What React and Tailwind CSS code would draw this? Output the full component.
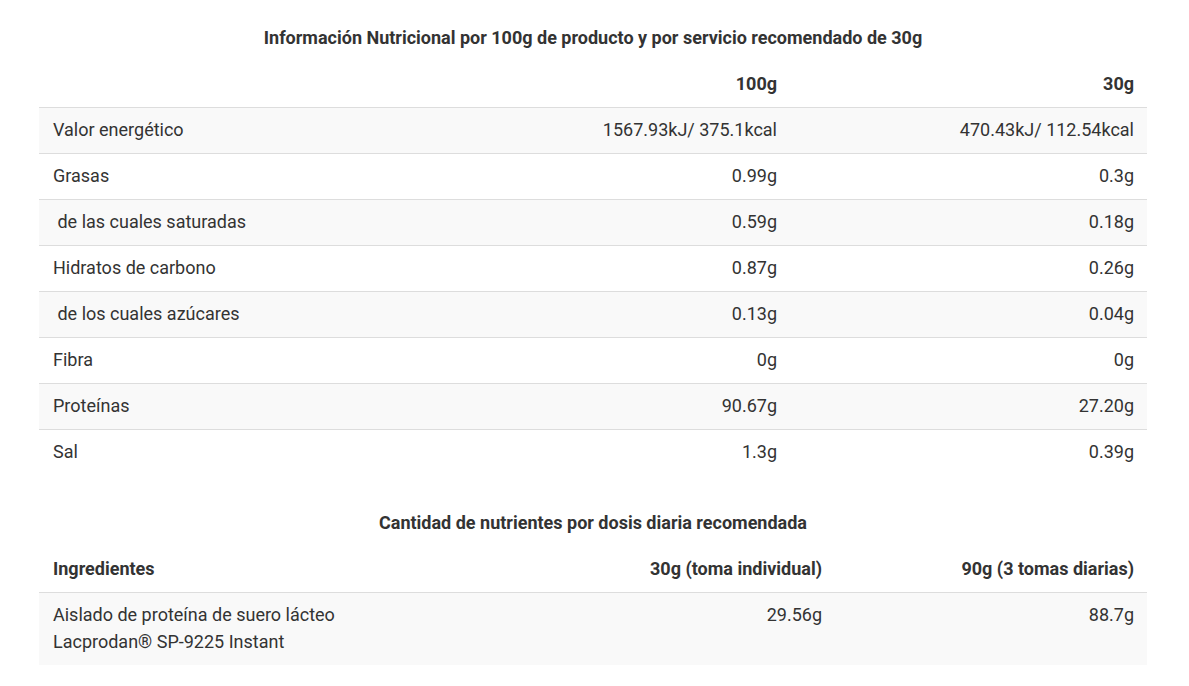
const nutrition = [
  ['Valor energético', '1567.93kJ/ 375.1kcal', '470.43kJ/ 112.54kcal'],
  ['Grasas', '0.99g', '0.3g'],
  ['\u00a0de las cuales saturadas', '0.59g', '0.18g'],
  ['Hidratos de carbono', '0.87g', '0.26g'],
  ['\u00a0de los cuales azúcares', '0.13g', '0.04g'],
  ['Fibra', '0g', '0g'],
  ['Proteínas', '90.67g', '27.20g'],
  ['Sal', '1.3g', '0.39g'],
];

function Caption({ children }) {
  return <div className="pt-[7px] pb-[11px] text-center font-bold">{children}</div>;
}

export default function App() {
  return (
    <div
      className="min-h-screen bg-white pl-[39px] pr-[42px] pt-[17px] text-[18px] leading-[27px] text-[#333]"
      style={{ fontFamily: 'Roboto, "Liberation Sans", sans-serif' }}
    >
      <Caption>Información Nutricional por 100g de producto y por servicio recomendado de 30g</Caption>
      <table className="w-full table-fixed border-collapse">
        <colgroup>
          <col />
          <col className="w-[357px]" />
          <col className="w-[357px]" />
        </colgroup>
        <thead>
          <tr className="font-bold">
            <th className="pl-[14px] pr-[13px] pt-[8px] pb-[10px]"></th>
            <th className="pl-[14px] pr-[13px] pt-[8px] pb-[10px] text-right">100g</th>
            <th className="pl-[14px] pr-[13px] pt-[8px] pb-[10px] text-right">30g</th>
          </tr>
        </thead>
        <tbody>
          {nutrition.map(([name, a, b], i) => (
            <tr key={name} className={`border-t border-[#ddd] ${i % 2 === 0 ? 'bg-[#f9f9f9]' : 'bg-white'}`}>
              <td className="pl-[14px] pr-[13px] pt-[8px] pb-[10px]">{name}</td>
              <td className="pl-[14px] pr-[13px] pt-[8px] pb-[10px] text-right">{a}</td>
              <td className="pl-[14px] pr-[13px] pt-[8px] pb-[10px] text-right">{b}</td>
            </tr>
          ))}
        </tbody>
      </table>

      <div className="mt-[27px]">
        <Caption>Cantidad de nutrientes por dosis diaria recomendada</Caption>
      </div>
      <table className="w-full table-fixed border-collapse">
        <colgroup>
          <col />
          <col className="w-[312px]" />
          <col className="w-[312px]" />
        </colgroup>
        <thead>
          <tr className="font-bold">
            <th className="pl-[14px] pr-[13px] pt-[8px] pb-[10px] text-left">Ingredientes</th>
            <th className="pl-[14px] pr-[13px] pt-[8px] pb-[10px] text-right">30g (toma individual)</th>
            <th className="pl-[14px] pr-[13px] pt-[8px] pb-[10px] text-right">90g (3 tomas diarias)</th>
          </tr>
        </thead>
        <tbody>
          <tr className="border-t border-[#ddd] bg-[#f9f9f9] align-top">
            <td className="pl-[14px] pr-[13px] pt-[8px] pb-[10px]">
              Aislado de proteína de suero lácteo
              <br />
              Lacprodan® SP-9225 Instant
            </td>
            <td className="pl-[14px] pr-[13px] pt-[8px] pb-[10px] text-right">29.56g</td>
            <td className="pl-[14px] pr-[13px] pt-[8px] pb-[10px] text-right">88.7g</td>
          </tr>
        </tbody>
      </table>
    </div>
  );
}
